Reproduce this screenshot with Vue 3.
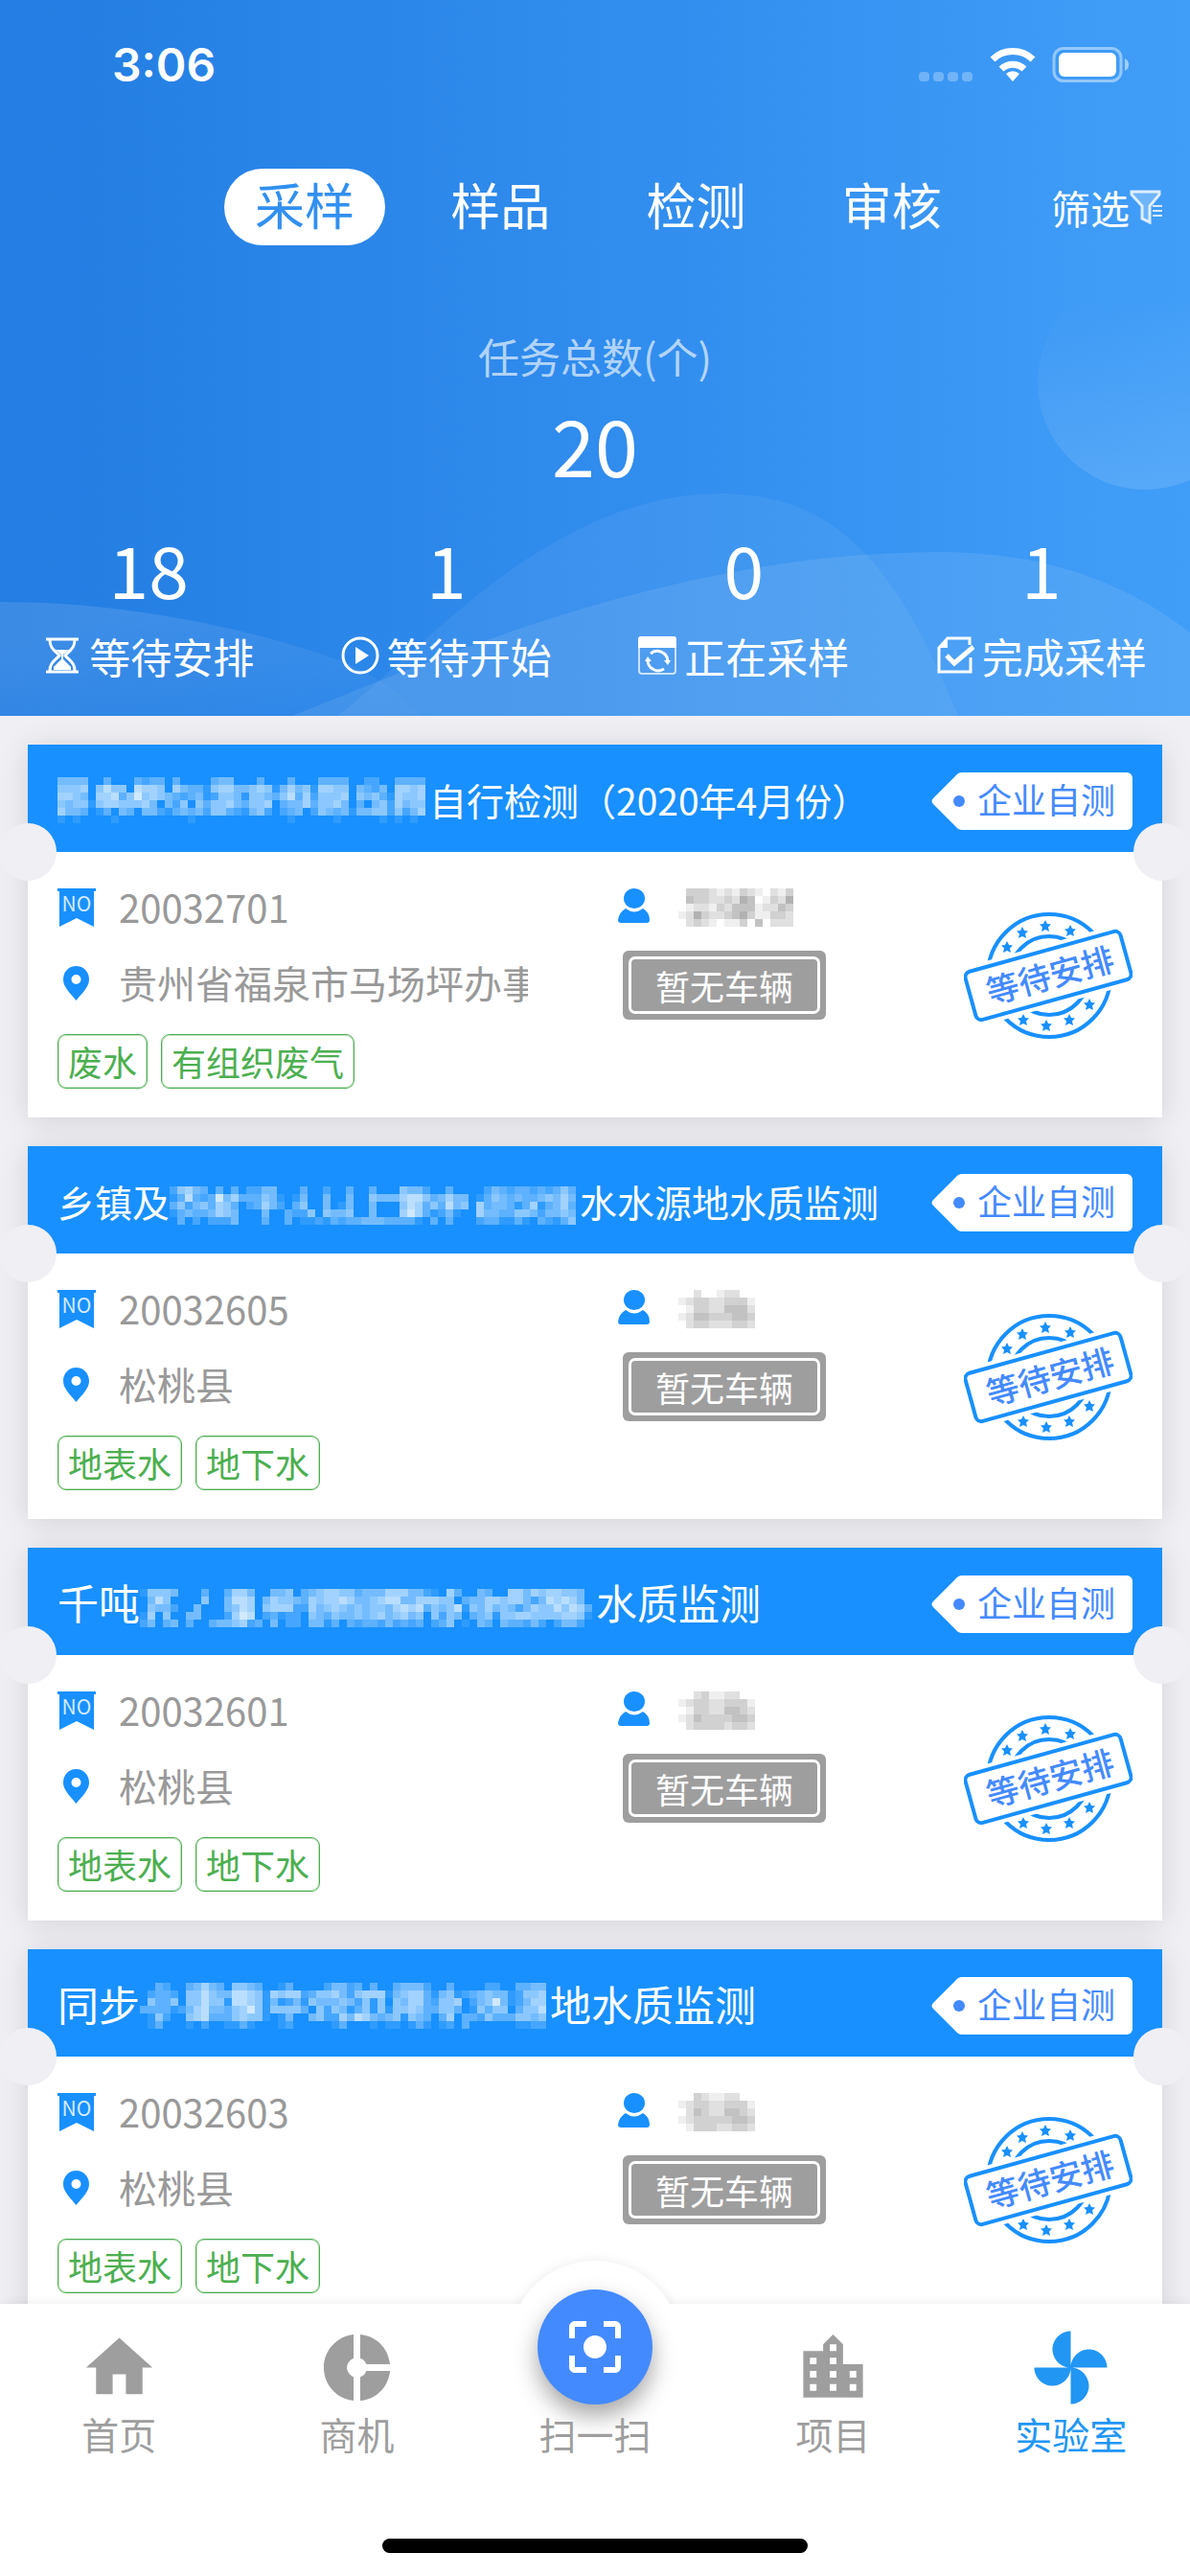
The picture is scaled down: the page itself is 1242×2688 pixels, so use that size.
<script setup>
import { ref } from 'vue'

const tabs = ['采样', '样品', '检测', '审核']
const activeTab = ref('采样')

const total = 20
const stats = [
  { icon: 'hourglass', label: '等待安排', value: 18 },
  { icon: 'play', label: '等待开始', value: 1 },
  { icon: 'refresh', label: '正在采样', value: 0 },
  { icon: 'check', label: '完成采样', value: 1 },
]

// masked text: one digit per 8px cell, digit / 10 = opacity
const tasks = [
  {
    no: '20032701',
    small: true,
    before: '',
    mask: [
      '444400300032330300003440003000300033330022003333',
      '555605755076650643315664456514645166550432406656',
      '665406673585654323412554155435736255560545316556',
      '545515665556404250535564355603446355640304526455',
      '644301304304421343425532145202340254341445525246',
      '101000010000000001000000000000100000100000101010',
    ],
    after: '自行检测（2020年4月份）',
    address: '贵州省福泉市马场坪办事',
    kinds: ['废水', '有组织废气'],
    person: [
      '033321213210213',
      '043322325401325',
      '012213244412243',
      '125322345311332',
      '023210113040222',
    ],
  },
  {
    no: '20032605',
    small: true,
    before: '乡镇及',
    mask: [
      '25643030302244000300200300300054420030000243233232353',
      '13732384633354101400400400544467753464401354343345464',
      '35245365302364203500401400400057635374506344313613463',
      '13433465400040032250544500400068631241006443355424454',
      '03020222400030030112132334443333103030002331131032135',
    ],
    after: '水水源地水质监测',
    address: '松桃县',
    kinds: ['地表水', '地下水'],
    person: ['0020012200', '1233223331', '0133224442', '1244333443', '0233222332'],
  },
  {
    no: '20032601',
    before: '千吨',
    mask: [
      '15554000300366400445034566553444666442106300430066465665540',
      '04750000500477604655436566764456774466655034466566424767640',
      '05442004000457605666226456545455467673545715464542465575763',
      '16050044000268702312205435445456456450525403451556655556651',
      '24034030034456230402204413032332423230235010430433242024420',
    ],
    after: '水质监测',
    address: '松桃县',
    kinds: ['地表水', '地下水'],
    person: ['0023112200', '1233223331', '0133224432', '1243333443', '0233332332'],
  },
  {
    no: '20032603',
    before: '同步',
    mask: [
      '00320034643055430013000024423030034442003000022003344',
      '02332055754477651656623556425666145663145123454412556',
      '05335055755177651412415444542515054663255602458412466',
      '33331246744356851555530525413515155653355301535503557',
      '01520056733356551014004522647643451543036033253335545',
      '01300010200113100012000001300010110131012030000001122',
    ],
    after: '地水质监测',
    address: '松桃县',
    kinds: ['地表水', '地下水'],
    person: ['0032112200', '1233223331', '0243224432', '1233333443', '0133322332'],
  },
]

const navs = [
  {
    label: '首页',
    path: 'M10 20v-6h4v6h5v-8h3L12 3 2 12h3v8z',
  },
  {
    label: '商机',
    path: 'M11 9.16V2c-5 .5-9 4.79-9 10s4 9.5 9 10v-7.16c-1-.41-2-1.52-2-2.84s1-2.43 2-2.84zM14.86 11H22c-.48-4.75-4-8.53-9-9v7.16c1 .3 1.52.98 1.86 1.84zM13 14.84V22c5-.47 8.52-4.25 9-9h-7.14c-.34.86-.86 1.54-1.86 1.84z',
  },
  { label: '扫一扫', scan: true },
  {
    label: '项目',
    path: 'M15 11V5l-3-3-3 3v2H3v14h18V11h-6zm-8 8H5v-2h2v2zm0-4H5v-2h2v2zm0-4H5V9h2v2zm6 8h-2v-2h2v2zm0-4h-2v-2h2v2zm0-4h-2V9h2v2zm0-4h-2V5h2v2zm6 12h-2v-2h2v2zm0-4h-2v-2h2v2z',
  },
  {
    label: '实验室',
    path: 'M12 12c0-3 2.5-5.5 5.5-5.5S23 9 23 12H12zm0 0c0 3-2.5 5.5-5.5 5.5S1 15 1 12h11zm0 0c-3 0-5.5-2.5-5.5-5.5S9 1 12 1v11zm0 0c3 0 5.5 2.5 5.5 5.5S15 23 12 23V12z',
    active: true,
  },
]

const stars = [
  [45, 36], [61, 21], [85, 14], [111, 19],
  [62, 112], [86, 118], [110, 112], [131, 96],
]

const maskCells = (rows) =>
  rows.flatMap((row, y) =>
    [...row].map((n, x) => ({ x: x * 8, y: y * 8, o: n / 10 })).filter((c) => c.o > 0)
  )
</script>

<template>
  <div class="app">
    <header class="hero">
      <svg class="hero-bg" viewBox="0 0 1242 747" preserveAspectRatio="none" aria-hidden="true">
        <defs>
          <linearGradient id="ball" x1="0" y1="0" x2="0" y2="1">
            <stop offset="0.1" stop-color="#fff" stop-opacity="0" />
            <stop offset="1" stop-color="#fff" stop-opacity="0.12" />
          </linearGradient>
          <linearGradient id="hillLeft" x1="0" y1="0" x2="1" y2="1">
            <stop offset="0.2" stop-color="#fff" stop-opacity="0.11" />
            <stop offset="0.9" stop-color="#fff" stop-opacity="0.02" />
          </linearGradient>
        </defs>
        <circle cx="1195" cy="399" r="112" fill="url(#ball)" />
        <path d="M0 628C130 628 260 655 356 690Q410 712 440 747H0z" fill="url(#hillLeft)" />
        <path d="M352 747C430 690 570 515 752 515C880 515 940 600 1000 747z" fill="#fff" fill-opacity="0.06" />
        <path d="M305 747C450 690 700 576 980 576C1100 576 1180 612 1242 660V747z" fill="#fff" fill-opacity="0.09" />
      </svg>

      <div class="status-bar">
        <span class="clock">3:06</span>
        <svg width="220" height="38" viewBox="0 0 220 38" fill="#fff" aria-hidden="true">
          <g fill-opacity="0.28">
            <rect x="0" y="26" width="11" height="10" rx="4" />
            <rect x="15" y="26" width="11" height="10" rx="4" />
            <rect x="30" y="26" width="11" height="10" rx="4" />
            <rect x="45" y="26" width="11" height="10" rx="4" />
          </g>
          <path d="M98 36l-7-8a10 10 0 0 1 14 0z" />
          <path d="M86 23a17.500 17.500 0 0 1 24 0" fill="none" stroke="#fff" stroke-width="7" />
          <path d="M77 13a30.500 30.500 0 0 1 42 0" fill="none" stroke="#fff" stroke-width="7" />
          <rect x="141" y="1.500" width="70" height="34" rx="10" fill="none" stroke="#fff" stroke-opacity="0.45" stroke-width="3" />
          <rect x="146" y="6" width="60" height="25" rx="6" />
          <path d="M215 12q4 2 4 6.500t-4 6.500z" fill-opacity="0.5" />
        </svg>
      </div>

      <nav class="tabs">
        <button
          v-for="tab in tabs"
          :key="tab"
          type="button"
          class="tab"
          :class="{ active: tab === activeTab }"
          @click="activeTab = tab"
        >
          <span>{{ tab }}</span>
        </button>
        <button type="button" class="filter">
          筛选
          <svg width="34" height="36" viewBox="0 0 34 36" fill="none" stroke="#fff" stroke-opacity="0.8" stroke-width="3" aria-hidden="true">
            <path d="M2 2h29v3L21 17v17l-8-4V17L2 5z" fill="#fff" fill-opacity="0.25" />
            <path d="M24 17h10M24 22h10M24 27h10" stroke-width="2" />
          </svg>
        </button>
      </nav>

      <div class="total">
        <p class="total-label">任务总数(个)</p>
        <p class="total-value">{{ total }}</p>
      </div>

      <ul class="stats">
        <li v-for="stat in stats" :key="stat.label">
          <span class="stat-value">{{ stat.value }}</span>
          <span class="stat-label">
            <svg width="40" height="40" viewBox="0 0 40 40" fill="none" stroke="#fff" stroke-width="3" aria-hidden="true">
              <template v-if="stat.icon === 'hourglass'">
                <path d="M3 3h34M3 37h34" />
                <path d="M7 4c0 9 6 11 10 16c-4 5-10 7-10 16M33 4c0 9-6 11-10 16c4 5 10 7 10 16" />
                <path d="M13 14h14l-6 5v5l8 8v3H11v-3l8-8v-5z" fill="#fff" stroke="none" />
              </template>
              <template v-else-if="stat.icon === 'play'">
                <circle cx="20" cy="20" r="18" />
                <path d="M15 11l14 9-14 9z" fill="#fff" stroke="none" />
              </template>
              <template v-else-if="stat.icon === 'refresh'">
                <rect x="1" y="1" width="38" height="38" rx="3" stroke-width="2" stroke-opacity="0.7" />
                <path d="M0 12V3q0-3 3-3h34q3 0 3 3v9z" fill="#fff" stroke="none" />
                <path d="M13 18a11 11 0 0 1 18 8M27 34a11 11 0 0 1-17-9" />
                <path d="M27 25h7l-3 5zM7 26h7l-4-5z" fill="#fff" stroke="none" />
              </template>
              <template v-else>
                <path d="M36 22v15H3V12l9-10h23v7" />
                <path d="M2 12L12 1v11z" fill="#fff" stroke="none" />
                <path d="M11 20l8 8 20-17" stroke-width="5" />
              </template>
            </svg>
            <span>{{ stat.label }}</span>
          </span>
        </li>
      </ul>
    </header>

    <main class="list">
      <article v-for="task in tasks" :key="task.no" class="card">
        <div class="card-head">
          <h2 class="card-title">
            <span :class="{ small: task.small }">{{ task.before }}<svg
              class="mask"
              :width="task.mask[0].length * 8"
              :height="task.mask.length * 8"
              fill="#fff"
              shape-rendering="crispEdges"
              aria-hidden="true"
            ><rect v-for="(c, i) in maskCells(task.mask)" :key="i" :x="c.x" :y="c.y" width="8" height="8" :fill-opacity="c.o" /></svg>{{ task.after }}</span>
          </h2>
          <span class="source">
            <svg class="source-tip" width="36" height="60" viewBox="0 0 36 60" aria-hidden="true">
              <path d="M36 0h-4q-4 0-7 4L2 27q-3 3 0 6l23 23q3 4 7 4h4z" fill="#fff" />
              <circle cx="29" cy="30" r="6" fill="#448aff" />
            </svg>
            <span class="source-text">企业自测</span>
          </span>
        </div>
        <div class="card-body">
          <div class="info">
            <p class="info-row">
              <svg width="40" height="40" viewBox="0 0 40 40" aria-hidden="true">
                <path d="M0 0h40v3h-2v37l-18-9-18 9V3H0z" fill="#1890ff" />
                <text x="20" y="24" text-anchor="middle" font-size="21" fill="#d6ebff">NO</text>
              </svg>
              <span class="info-text">{{ task.no }}</span>
            </p>
            <p class="info-row">
              <svg width="40" height="40" viewBox="0 0 40 40" aria-hidden="true">
                <path
                  d="M19.500 2C12 2 6 8 6 16c0 8 7 14 13.500 22C26 30 33 24 33 16c0-8-6-14-13.500-14zm0 9a5 5 0 1 1 0 10 5 5 0 0 1 0-10z"
                  fill="#1890ff"
                />
              </svg>
              <span class="info-text">{{ task.address }}</span>
            </p>
            <div class="kinds">
              <span v-for="kind in task.kinds" :key="kind" class="kind">{{ kind }}</span>
            </div>
          </div>
          <div class="crew">
            <p class="person">
              <svg width="33" height="36" viewBox="0 0 33 36" fill="#1890ff" aria-hidden="true">
                <ellipse cx="17" cy="10.500" rx="11" ry="10.500" />
                <path d="M8 21q9 7 18 0q7 4 7 12q0 3-3 3H3q-3 0-3-3q1-8 8-12z" />
              </svg>
              <svg
                :width="task.person[0].length * 8"
                height="40"
                fill="#666"
                shape-rendering="crispEdges"
                aria-hidden="true"
              >
                <rect v-for="(c, i) in maskCells(task.person)" :key="i" :x="c.x" :y="c.y" width="8" height="8" :fill-opacity="c.o" />
              </svg>
            </p>
            <button type="button" class="car"><span>暂无车辆</span></button>
          </div>
          <svg class="stamp" width="176" height="134" viewBox="0 0 176 134" role="img" aria-label="等待安排">
            <g fill="none" stroke="#1890ff" stroke-width="4">
              <circle cx="89" cy="66" r="64" />
              <circle cx="89" cy="66" r="41" />
            </g>
            <path
              v-for="([x, y], i) in stars"
              :key="i"
              :transform="`translate(${x} ${y})`"
              d="M0-6l2 4 4 .5-3 3 1 4.500-4-2-4 2 1-4.500-3-3 4-.5z"
              fill="#1890ff"
            />
            <g transform="rotate(-15.500 88 66)">
              <rect x="-2" y="34" width="180" height="64" fill="#fff" />
              <rect x="4" y="40" width="168" height="52" rx="6" fill="#fff" stroke="#1890ff" stroke-width="4" />
              <text x="90" y="79" text-anchor="middle" font-size="34" font-weight="500" fill="#448aff">等待安排</text>
            </g>
          </svg>
        </div>
      </article>
    </main>

    <footer class="tabbar">
      <nav class="tabbar-items">
        <a v-for="nav in navs" :key="nav.label" href="#" class="nav" :class="{ active: nav.active }">
          <span v-if="nav.scan" class="scan">
            <svg width="72" height="72" viewBox="0 0 24 24" fill="#fff" aria-hidden="true">
              <path d="M12 8c-2.210 0-4 1.790-4 4s1.790 4 4 4 4-1.790 4-4-1.790-4-4-4zm-7 7H3v4c0 1.100.9 2 2 2h4v-2H5v-4zM5 5h4V3H5c-1.100 0-2 .9-2 2v4h2V5zm14-2h-4v2h4v4h2V5c0-1.100-.9-2-2-2zm0 16h-4v2h4c1.100 0 2-.9 2-2v-4h-2v4z" />
            </svg>
          </span>
          <svg v-else class="nav-icon" viewBox="0 0 24 24" fill="currentColor" aria-hidden="true">
            <path :d="nav.path" />
          </svg>
          <span class="nav-label">{{ nav.label }}</span>
        </a>
      </nav>
      <div class="home-bar"></div>
    </footer>
  </div>
</template>

<style>
body {
  margin: 0;
}
</style>

<style scoped>
.app {
  display: flex;
  flex-direction: column;
  height: 100vh;
  overflow: hidden;
  background: #efeff4;
  font-family: "Noto Sans CJK SC", sans-serif;
}

p,
h2,
ul {
  margin: 0;
  padding: 0;
}

button {
  border: none;
  padding: 0;
  background: none;
  color: inherit;
  font-family: inherit;
  cursor: pointer;
}

svg {
  flex-shrink: 0;
}

/* header */
.hero {
  position: relative;
  flex-shrink: 0;
  padding-bottom: 33px;
  background: linear-gradient(90deg, #237de2, #308ced 50%, #419ef8);
  color: #fff;
}

.hero-bg {
  position: absolute;
  inset: 0;
  width: 100%;
  height: 100%;
}

.status-bar,
.tabs,
.total,
.stats {
  position: relative;
}

.status-bar {
  display: flex;
  justify-content: space-between;
  align-items: center;
  height: 136px;
  padding: 0 63px 0 117px;
}

.clock {
  font: 600 48px/60px Inter, sans-serif;
}

.tabs {
  display: flex;
  align-items: center;
  height: 160px;
  padding: 0 29px 0 216px;
}

.tab {
  flex: 204 1 0;
  font-size: 52px;
  line-height: 74px;
}

.tab span {
  display: inline-block;
  padding: 0 32px 6px;
  border-radius: 40px;
}

.tab.active span {
  background: #fff;
  color: #3190f0;
}

.filter {
  display: flex;
  flex: 180 1 0;
  align-items: center;
  justify-content: flex-end;
  font-size: 41px;
  line-height: 60px;
}

.total {
  padding-top: 42px;
  text-align: center;
}

.total-label {
  font-size: 43px;
  line-height: 66px;
  color: rgba(255, 255, 255, 0.65);
}

.total-value {
  font-size: 81px;
  line-height: 118px;
}

.stats {
  display: grid;
  grid-template-columns: repeat(4, 1fr);
  padding-top: 14px;
  list-style: none;
}

.stats li {
  display: flex;
  flex-direction: column;
  align-items: center;
}

.stat-value {
  font-size: 75px;
  line-height: 114px;
}

.stat-label {
  display: flex;
  align-items: center;
  gap: 8px;
  padding-top: 4px;
  font-size: 43px;
  line-height: 60px;
}

/* task list */
.list {
  display: flex;
  flex: 1;
  flex-direction: column;
  gap: 30px;
  min-height: 0;
  padding: 30px 29px;
  overflow-x: hidden;
  overflow-y: auto;
  scrollbar-width: none;
}

.card {
  flex-shrink: 0;
  background: #fff;
  box-shadow: 0 3px 30px rgba(0, 0, 0, 0.12);
}

.card-head {
  position: relative;
  display: flex;
  align-items: center;
  justify-content: space-between;
  height: 112px;
  padding: 0 31px;
  background: #1890ff;
}

/* ticket notches on both sides */
.card-head::before,
.card-head::after {
  content: "";
  position: absolute;
  bottom: -30px;
  width: 60px;
  height: 60px;
  border-radius: 50%;
  background: #efeff4;
}

.card-head::before {
  left: -30px;
}

.card-head::after {
  right: -30px;
}

.card-title {
  min-width: 0;
  font-size: 43px;
  font-weight: 400;
  line-height: 64px;
  color: #fff;
  white-space: nowrap;
}

.small {
  font-size: 39px;
}

.mask {
  margin-right: 4px;
  vertical-align: -8px;
}

.source {
  display: flex;
  flex-shrink: 0;
  margin-bottom: -6px;
  height: 60px;
}

.source-text {
  padding: 0 18px 0 12px;
  border-radius: 0 6px 6px 0;
  background: #fff;
  font-size: 36px;
  line-height: 54px;
  color: #448aff;
}

.card-body {
  display: grid;
  grid-template-columns: 585fr 361fr 176px;
  padding: 38px 31px 30px;
}

.info {
  min-width: 0;
  padding-right: 94px;
}

.info-row {
  display: flex;
  gap: 24px;
  height: 40px;
  margin-bottom: 39px;
}

.info-text {
  min-width: 0;
  margin: -11px 0 -9px;
  overflow: hidden;
  font-size: 40px;
  line-height: 60px;
  color: #999;
  white-space: nowrap;
}

.kinds {
  display: flex;
  gap: 14px;
  margin-top: -6px;
}

.kind {
  padding: 0 10px;
  border: 1px solid #4caf50;
  border-radius: 9px;
  box-shadow: inset 0 0 0 1px rgba(76, 175, 80, 0.35);
  font-size: 36px;
  line-height: 55px;
  color: #4caf50;
}

.person {
  display: flex;
  gap: 30px;
  height: 40px;
}

.car {
  margin: 25px 0 0 5px;
  padding: 6px;
  border-radius: 6px;
  background: #9e9e9e;
  color: #fff;
  font-size: 36px;
  line-height: 54px;
}

.car span {
  display: block;
  padding: 0 25px;
  border: 3px solid #fff;
  border-radius: 7px;
}

.stamp {
  margin-top: 25px;
}

/* bottom bar */
.tabbar {
  position: relative;
  flex-shrink: 0;
  height: 284px;
  background: #fff;
  box-shadow: 0 0 12px rgba(0, 0, 0, 0.08);
}

.tabbar-items {
  display: grid;
  grid-template-columns: repeat(5, 1fr);
}

.nav {
  position: relative;
  display: flex;
  flex-direction: column;
  align-items: center;
  padding-top: 25px;
  color: #9e9e9e;
  text-decoration: none;
}

.nav.active {
  color: #2196f3;
}

.nav-icon {
  width: 83px;
  height: 83px;
}

.nav-label {
  position: relative;
  font-size: 39px;
  line-height: 54px;
}

/* raised scan button */
.scan {
  position: relative;
  display: flex;
  align-items: center;
  justify-content: center;
  width: 120px;
  height: 120px;
  margin: -40px 0 3px;
  border-radius: 50%;
  background: #448aff;
  box-shadow: 0 12px 24px rgba(0, 0, 0, 0.35);
}

.nav:has(.scan)::before {
  content: "";
  position: absolute;
  top: -45px;
  left: calc(50% - 90px);
  width: 180px;
  height: 180px;
  border-radius: 50%;
  background: #fff;
  box-shadow: 0 0 12px rgba(0, 0, 0, 0.08);
  clip-path: inset(-20px -20px 135px -20px);
}

.home-bar {
  position: absolute;
  bottom: 24px;
  left: 50%;
  width: 444px;
  height: 15px;
  margin-left: -222px;
  border-radius: 8px;
  background: #000;
}
</style>
